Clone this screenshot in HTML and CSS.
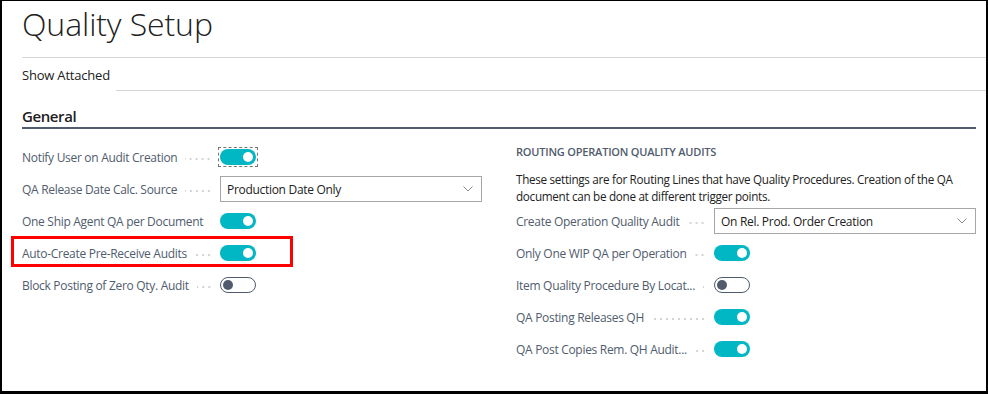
FILE: index.html
```html
<!DOCTYPE html>
<html lang="en">
<head>
<meta charset="utf-8">
<title>Quality Setup</title>
<link rel="stylesheet" href="styles.css">
</head>
<body>
<div class="frame">
  <h1 class="title">Quality Setup</h1>
  <div class="actionbar">
    <div class="action-top"></div>
    <div class="action-row">
      <span class="action">Show Attached</span>
      <span class="action-fill"></span>
    </div>
  </div>
  <section class="fasttab">
    <h2 class="tab-title">General</h2>
    <div class="cols">
      <div class="col">
        <div class="row">
          <div class="cap"><span class="label">Notify User on Audit Creation</span><span class="dots"></span></div>
          <div class="ctl"><span class="focus"><span class="toggle on"></span></span></div>
        </div>
        <div class="row">
          <div class="cap"><span class="label">QA Release Date Calc. Source</span><span class="dots"></span></div>
          <div class="ctl"><div class="select"><span>Production Date Only</span><svg class="chev" width="10" height="6" viewBox="0 0 10 6"><path d="M0.5 0.5 L5 5 L9.5 0.5" fill="none" stroke="#8a8a8a" stroke-width="1"/></svg></div></div>
        </div>
        <div class="row">
          <div class="cap"><span class="label">One Ship Agent QA per Document</span><span class="dots"></span></div>
          <div class="ctl"><span class="toggle on"></span></div>
        </div>
        <div class="row highlight">
          <div class="cap"><span class="label">Auto-Create Pre-Receive Audits</span><span class="dots"></span></div>
          <div class="ctl"><span class="toggle on"></span></div>
        </div>
        <div class="row">
          <div class="cap"><span class="label">Block Posting of Zero Qty. Audit</span><span class="dots"></span></div>
          <div class="ctl"><span class="toggle off"></span></div>
        </div>
      </div>
      <div class="col">
        <h3 class="group-title">ROUTING OPERATION QUALITY AUDITS</h3>
        <p class="desc">These settings are for Routing Lines that have Quality Procedures. Creation of the QA document can be done at different trigger points.</p>
        <div class="row">
          <div class="cap"><span class="label">Create Operation Quality Audit</span><span class="dots"></span></div>
          <div class="ctl"><div class="select"><span>On Rel. Prod. Order Creation</span><svg class="chev" width="10" height="6" viewBox="0 0 10 6"><path d="M0.5 0.5 L5 5 L9.5 0.5" fill="none" stroke="#8a8a8a" stroke-width="1"/></svg></div></div>
        </div>
        <div class="row">
          <div class="cap"><span class="label">Only One WIP QA per Operation</span><span class="dots"></span></div>
          <div class="ctl"><span class="toggle on"></span></div>
        </div>
        <div class="row">
          <div class="cap"><span class="label">Item Quality Procedure By Locat...</span><span class="dots"></span></div>
          <div class="ctl"><span class="toggle off"></span></div>
        </div>
        <div class="row">
          <div class="cap"><span class="label">QA Posting Releases QH</span><span class="dots"></span></div>
          <div class="ctl"><span class="toggle on"></span></div>
        </div>
        <div class="row">
          <div class="cap"><span class="label">QA Post Copies Rem. QH Audit...</span><span class="dots"></span></div>
          <div class="ctl"><span class="toggle on"></span></div>
        </div>
      </div>
    </div>
  </section>
</div>
</body>
</html>
```

FILE: styles.css
```css
*, *::before, *::after { box-sizing: border-box; }
html, body { margin: 0; padding: 0; background: #fff; }
body { font-family: "Open Sans", "Noto Sans", sans-serif; color: #212121; }

.frame {
  width: 988px;
  height: 394px;
  border-style: solid;
  border-color: #000;
  border-width: 1px 2px 3px 2px;
  padding: 0 0 0 20px;
  overflow: hidden;
}

.title {
  margin: 0;
  height: 56px;
  padding-top: 3px;
  font-size: 32px;
  line-height: 40px;
  font-weight: 300;
  color: #212121;
  letter-spacing: -0.1px;
}

.action-top { height: 1px; background: #d6d6d6; }
.action-row { display: flex; align-items: flex-end; height: 33px; }
.action { font-size: 13px; line-height: 35px; height: 33px; color: #212121; padding-right: 6px; letter-spacing: -0.2px; }
.action-fill { flex: 1; height: 1px; background: #d6d6d6; }

.fasttab { padding-right: 10px; }
.tab-title {
  margin: 0;
  height: 38px;
  padding-top: 15px;
  font-size: 15px;
  line-height: 20px;
  font-weight: 600;
  color: #212121;
  letter-spacing: -0.4px;
  border-bottom: 2px solid #505c6d;
}

.cols { display: grid; grid-template-columns: 460px 460px; column-gap: 34px; padding-top: 12px; }

.row { display: flex; align-items: center; height: 32px; position: relative; }
.cap { width: 198px; flex: none; display: flex; align-items: center; overflow: hidden; }
.label { font-size: 12px; color: #505c6d; white-space: nowrap; letter-spacing: -0.3px; flex: none; }
.dots {
  flex: 1;
  height: 2px;
  margin: 4px 8px 0 8px;
  background-image: radial-gradient(circle, #d4d4d4 0.8px, transparent 1px);
  background-size: 6px 2px;
  background-repeat: repeat-x;
  background-position: right center;
}
.ctl { width: 262px; flex: none; display: flex; align-items: center; }

.toggle { display: block; width: 36px; height: 16px; border-radius: 8px; position: relative; }
.toggle.on { background: #00b7c3; }
.toggle.on::after { content: ""; position: absolute; right: 3px; top: 3px; width: 10px; height: 10px; border-radius: 50%; background: #fff; }
.toggle.off { border: 1.5px solid #505c6d; background: #fff; }
.toggle.off::after { content: ""; position: absolute; left: 1.5px; top: 1.5px; width: 10px; height: 10px; border-radius: 50%; background: #505c6d; }

.focus { display: block; padding: 1px; border: 1px dashed #767676; margin: 0 0 0 -2px; }

.select {
  width: 262px;
  height: 26px;
  border: 1px solid #a6a6a6;
  display: flex;
  align-items: center;
  justify-content: space-between;
  padding: 0 8px 0 6px;
  font-size: 12px;
  letter-spacing: -0.3px;
  color: #212121;
}
.chev { display: block; }

.highlight::after {
  content: "";
  position: absolute;
  left: -11px;
  top: -1px;
  width: 282px;
  height: 31px;
  border: 3px solid #f00;
  pointer-events: none;
}

.group-title {
  margin: 3px 0 0 0;
  height: 16px;
  font-size: 11px;
  line-height: 16px;
  font-weight: 600;
  color: #505c6d;
  letter-spacing: -0.2px;
}
.desc { margin: 11px 0 0 0; height: 34px; font-size: 11.7px; line-height: 17px; color: #212121; letter-spacing: -0.3px; }
```
